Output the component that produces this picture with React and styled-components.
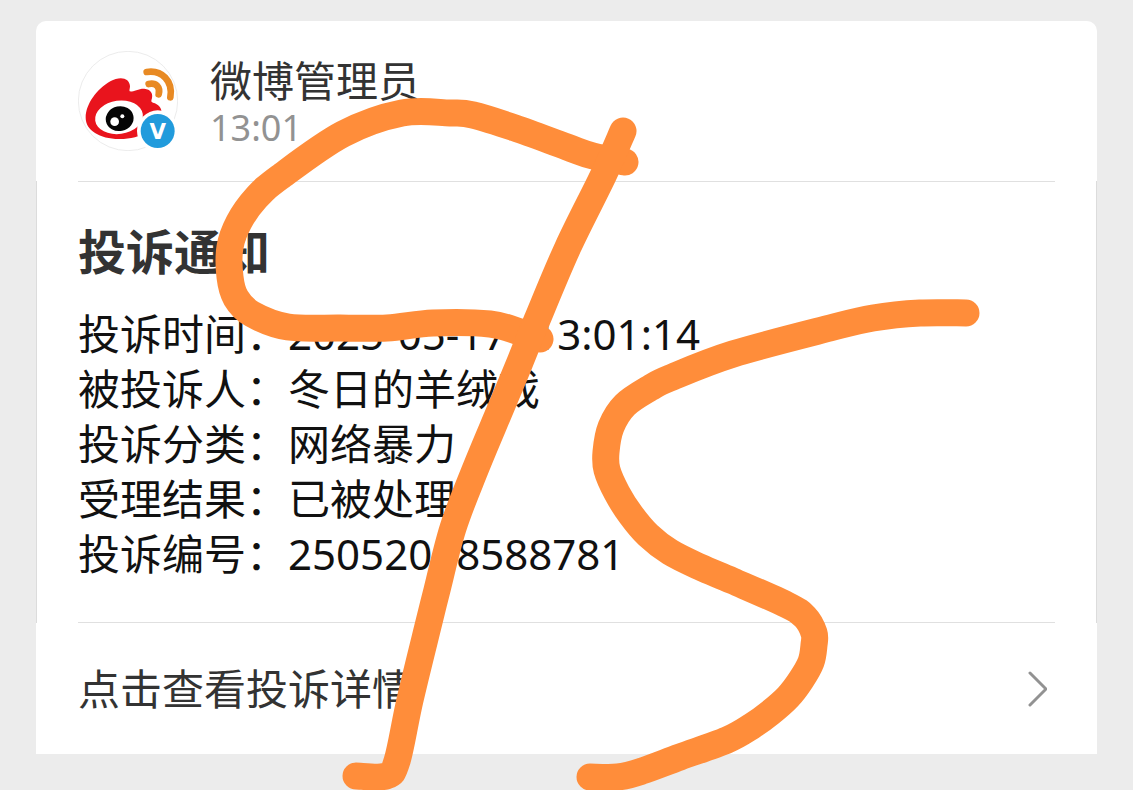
import styled, { createGlobalStyle } from "styled-components";

const details = [
  { label: "投诉时间", value: ["2025-05-17", "13:01:14"] },
  { label: "被投诉人", value: ["冬日的羊绒戏"] },
  { label: "投诉分类", value: ["网络暴力"] },
  { label: "受理结果", value: ["已被处理"] },
  { label: "投诉编号", value: ["25052018588781"] },
];

const strokes = [
  [
    [625, 162], [593, 156], [567, 147], [515, 128], [473, 115], [450, 113],
    [402, 113], [343, 134], [280, 177], [256, 198], [239, 222], [230, 247],
    [230, 277], [236, 298], [252, 314], [288, 327], [340, 328], [387, 328],
    [433, 323], [490, 324], [520, 332], [540, 339],
  ],
  [
    [623, 131], [603, 176], [568, 247], [537, 320], [518, 367], [500, 410],
    [475, 470], [453, 528], [437, 590], [429, 622], [410, 700], [397, 761],
    [386, 776], [356, 776],
  ],
  [
    [966, 313], [920, 313], [873, 318], [830, 328], [733, 354], [670, 378],
    [650, 388], [625, 405], [611, 427], [606, 452], [607, 470], [617, 493],
    [631, 515], [648, 535], [670, 552], [700, 567], [733, 581], [787, 605],
    [805, 617], [814, 633], [814, 645], [811, 662], [801, 680], [788, 697],
    [770, 713], [752, 726], [727, 740], [680, 757], [642, 771], [618, 777],
    [590, 777],
  ],
];

// smooth curve that passes through every point
function toPath(points) {
  const at = (i) => points[Math.min(Math.max(i, 0), points.length - 1)];
  let d = `M${points[0].join(" ")}`;
  for (let i = 0; i < points.length - 1; i++) {
    const [a, b, c, e] = [at(i - 1), at(i), at(i + 1), at(i + 2)];
    d += ` C${b[0] + (c[0] - a[0]) / 6} ${b[1] + (c[1] - a[1]) / 6}`;
    d += ` ${c[0] - (e[0] - b[0]) / 6} ${c[1] - (e[1] - b[1]) / 6}`;
    d += ` ${c[0]} ${c[1]}`;
  }
  return d;
}

function Logo() {
  return (
    <Avatar viewBox="25 33 300 300" role="img" aria-label="微博">
      <circle cx="175" cy="183" r="149" fill="#fff" stroke="#ececec" strokeWidth="3" />
      <path
        d="M48 233C48 192 82 147 122 124C151 107 180 113 181 139C181 146 178 151 180 154C188 157 207 145 224 146C243 148 250 160 247 174C245 182 243 185 250 188C266 192 277 203 276 221C273 265 211 298 148 297C90 296 48 271 48 233Z"
        fill="#e9141d"
      />
      <ellipse cx="148" cy="232" rx="72" ry="50" fill="#fff" transform="rotate(-8 148 232)" />
      <ellipse cx="150" cy="236" rx="42" ry="37" fill="#050505" transform="rotate(-12 150 236)" />
      <circle cx="135" cy="245" r="13" fill="#fff" />
      <circle cx="158" cy="229" r="6" fill="#fff" />
      <path
        d="M231 96C276 89 311 123 302 172M237 132C259 127 273 142 267 163"
        fill="none"
        stroke="#e88a24"
        strokeWidth="20"
        strokeLinecap="round"
      />
      <circle cx="264" cy="273" r="62" fill="#fff" />
      <circle cx="264" cy="273" r="51" fill="#219bdc" />
      <BadgeText x="264" y="297" textAnchor="middle">V</BadgeText>
    </Avatar>
  );
}

function App() {
  return (
    <Page>
      <GlobalStyle />
      <Card>
        <Header>
          <Logo />
          <Sender>
            <Name>微博管理员</Name>
            <Time>13:01</Time>
          </Sender>
        </Header>
        <Content>
          <Title>投诉通知</Title>
          <Details>
            {details.map((item) => (
              <Row key={item.label}>
                <Label>{item.label}{"\uff1a"}</Label>
                <Value>
                  {item.value.map((part) => (
                    <span key={part}>{part}</span>
                  ))}
                </Value>
              </Row>
            ))}
          </Details>
        </Content>
        <Footer href="#detail">
          <span>点击查看投诉详情</span>
          <Chevron viewBox="0 0 20 36" aria-hidden="true">
            <path d="M3 2L19 18L3 34" />
          </Chevron>
        </Footer>
      </Card>
      <Drawing viewBox="0 0 1133 790" aria-hidden="true">
        {strokes.map((points, index) => (
          <path key={index} d={toPath(points)} />
        ))}
      </Drawing>
    </Page>
  );
}

export default App;

const GlobalStyle = createGlobalStyle`
  * {
    box-sizing: border-box;
  }
  body {
    margin: 0;
    background-color: #ececec;
    font-family: "Noto Sans", "Noto Sans CJK SC", sans-serif;
  }
`;

const Page = styled.div`
  position: relative;
  min-height: 100vh;
  padding: 21px 36px 36px;
  overflow: hidden;
`;

const Card = styled.main`
  background-color: #fff;
  border-radius: 10px 10px 0 0;
`;

const Header = styled.header`
  display: flex;
  align-items: center;
  gap: 32px;
  margin: 0 42px;
  padding: 30px 0;
`;

const Avatar = styled.svg`
  width: 100px;
  height: 100px;
  flex: none;
`;

const BadgeText = styled.text`
  font-family: "DejaVu Sans", sans-serif;
  font-size: 64px;
  font-weight: 700;
  fill: #fff;
`;

const Sender = styled.div`
  padding-top: 6px;
`;

const Name = styled.p`
  margin: 0;
  font-size: 42px;
  line-height: 48px;
  color: #333;
`;

const Time = styled.p`
  margin: 0;
  font-size: 36px;
  line-height: 46px;
  color: #929292;
`;

const Content = styled.section`
  padding: 0 41px;
  border: solid #dcdcdc;
  border-width: 0 1px;

  &::before,
  &::after {
    content: "";
    display: block;
    height: 1px;
    background-color: #e0e0e0;
  }
`;

const Title = styled.h1`
  margin: 34px 0 18px;
  font-size: 48px;
  font-weight: 700;
  line-height: 72px;
  color: #333;
`;

const Details = styled.dl`
  margin: 0 0 41px;
`;

const Row = styled.div`
  display: flex;
  font-size: 42px;
  line-height: 55px;
  color: #111;
`;

const Label = styled.dt`
  flex: none;
  white-space: nowrap;
`;

const Value = styled.dd`
  display: flex;
  gap: 26px;
  margin: 0;
`;

const Footer = styled.a`
  display: flex;
  justify-content: space-between;
  align-items: center;
  padding: 35px 50px 35px 42px;
  font-size: 42px;
  line-height: 61px;
  color: #333;
  text-decoration: none;
`;

const Chevron = styled.svg`
  width: 20px;
  height: 36px;
  fill: none;
  stroke: #929292;
  stroke-width: 3;
  stroke-linecap: round;
  stroke-linejoin: round;
`;

const Drawing = styled.svg`
  position: absolute;
  top: 0;
  left: 0;
  width: 100%;
  pointer-events: none;
  fill: none;
  stroke: #ff8d3a;
  stroke-width: 27;
  stroke-linecap: round;
  stroke-linejoin: round;
`;
